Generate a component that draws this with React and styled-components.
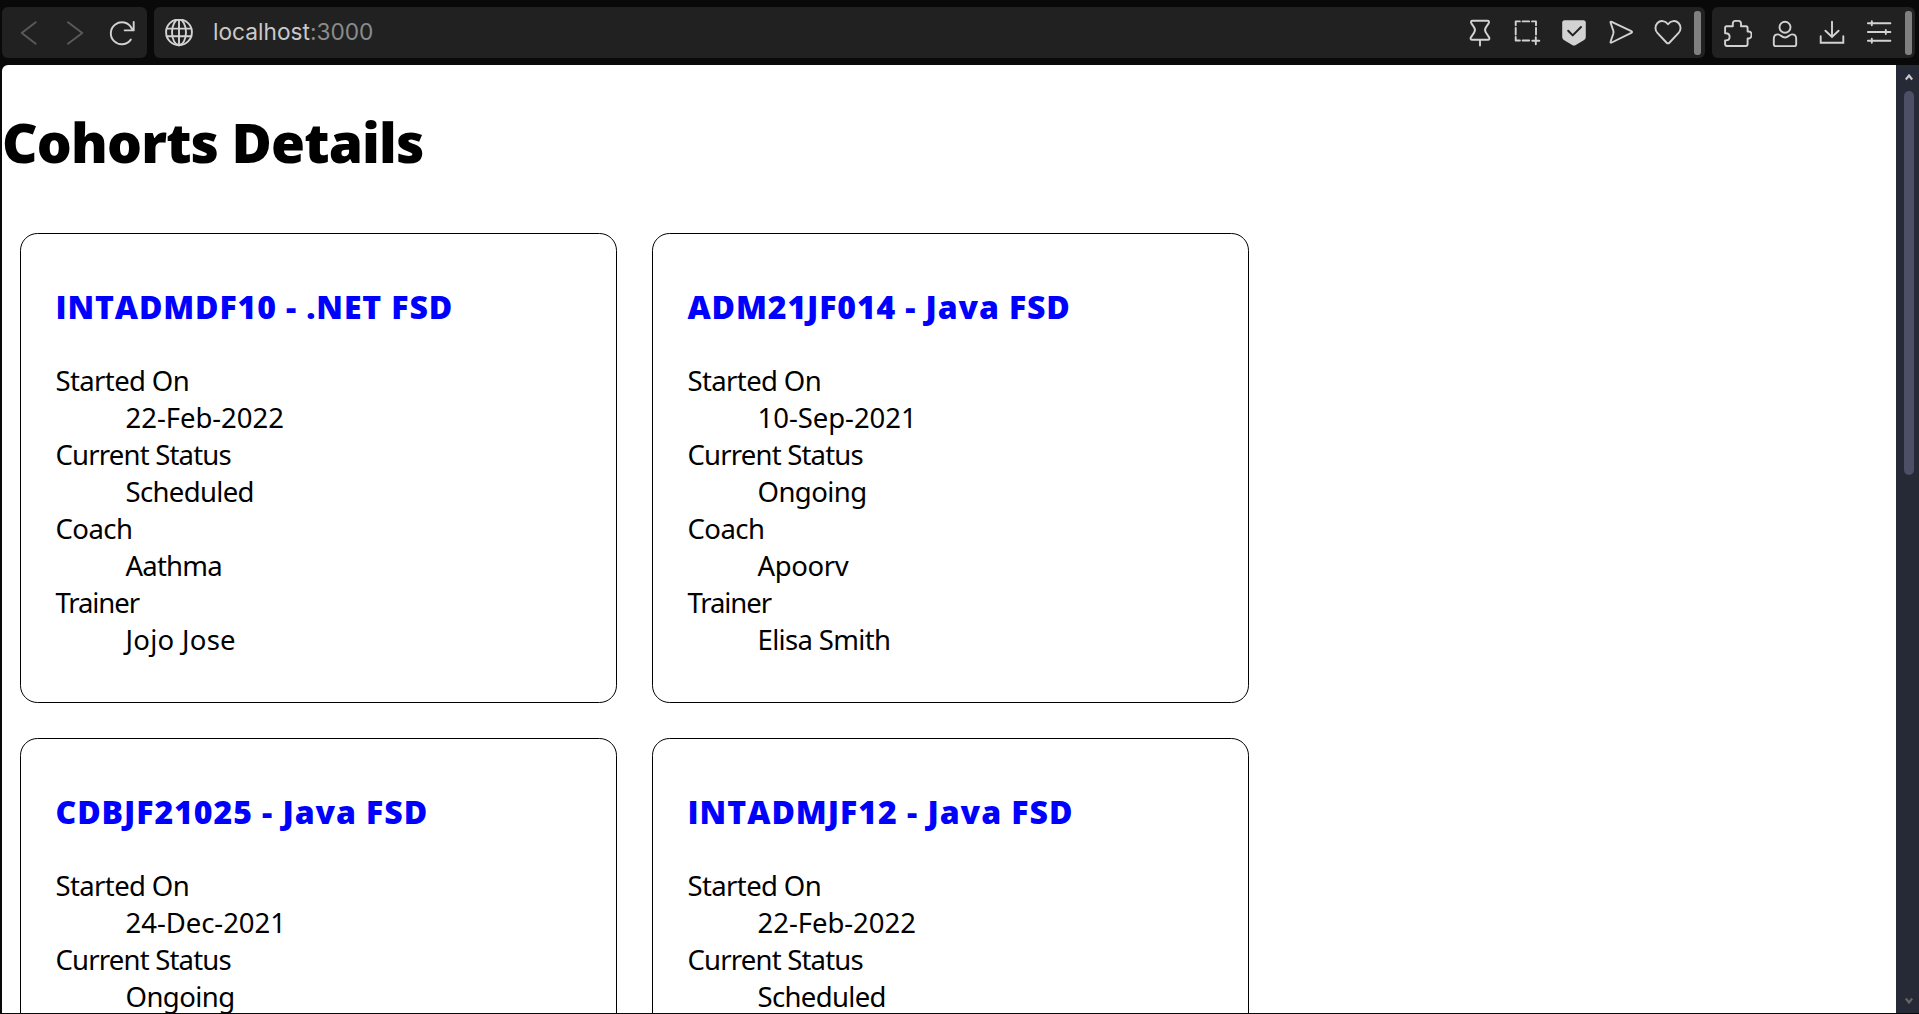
import React from 'react';
import styled, { createGlobalStyle } from 'styled-components';

const Global = createGlobalStyle`
  * { box-sizing: border-box; }
  html, body { margin: 0; padding: 0; background: #090909; overflow: hidden; }
`;

const Window = styled.div`
  width: 1919px;
  height: 1014px;
  display: flex;
  flex-direction: column;
  background: #090909;
  font-family: 'Noto Sans', 'Open Sans', sans-serif;
`;

const Toolbar = styled.header`
  flex: none;
  height: 65px;
  padding: 7px 4px 7px 2px;
  display: flex;
  gap: 7px;
`;

const Group = styled.div`
  height: 51px;
  display: flex;
  align-items: center;
  gap: 19px;
  flex: ${(p) => (p.$grow ? '1' : 'none')};
  padding: 1px ${(p) => p.$right}px 0 ${(p) => p.$left}px;
  border-radius: 6px;
  background: #212121;
`;

const Glyph = styled.svg`
  flex: none;
  display: block;
  width: 28px;
  height: 28px;
  fill: none;
  stroke: ${(p) => (p.$dim ? '#5a5a5a' : '#d2d2d2')};
  stroke-width: 1.9;
  stroke-linecap: round;
  stroke-linejoin: round;
`;

const Address = styled.div`
  flex: 1;
  padding: 0 0 2px 1px;
  font: 400 22.7px/28px Inter, 'Open Sans', sans-serif;
  color: #c9c9c9;
`;

const Port = styled.span`
  color: #8b8b8b;
`;

const Handle = styled.i`
  width: 7px;
  height: 44px;
  margin-left: -7px;
  border-radius: 3px;
  background: #808080;
`;

const Viewport = styled.div`
  flex: 1;
  min-height: 0;
  display: flex;
  margin: 0 0 1px 2px;
  overflow: hidden;
  border-top-left-radius: 6px;
  background: #fff;
`;

const Page = styled.main`
  flex: 1;
  padding-top: 39px;
  overflow: hidden;
  color: #000;
`;

const Heading = styled.h1`
  margin: 0;
  font-family: 'Open Sans', 'Noto Sans', sans-serif;
  font-size: 55px;
  line-height: 75px;
  font-weight: 800;
  letter-spacing: -0.86px;
  white-space: nowrap;
`;

const Cards = styled.div`
  display: grid;
  grid-template-columns: 597px 597px;
  gap: 35px;
  padding: 54px 0 0 18px;
`;

const Card = styled.section`
  height: 470px;
  padding: 51px 34px 0 34.5px;
  border: 1px solid #000;
  border-radius: 17.5px;
`;

const Title = styled.h3`
  margin: 0 0 33px;
  font-family: 'Open Sans', 'Noto Sans', sans-serif;
  font-size: 32px;
  line-height: 44px;
  font-weight: 800;
  color: #00f;
  white-space: nowrap;
  letter-spacing: ${(p) => p.$track}px;
`;

const Details = styled.dl`
  margin: 0;
  font-size: 27.5px;
  line-height: 37px;
`;

const Term = styled.dt`
  letter-spacing: ${(p) => p.$track}px;
`;

const Value = styled.dd`
  margin: 0 0 0 70px;
  letter-spacing: ${(p) => p.$track}px;
`;

const Scrollbar = styled.aside`
  flex: none;
  width: 23px;
  padding: 8px 5px 8px 8px;
  display: flex;
  flex-direction: column;
  justify-content: space-between;
  align-items: center;
  background: #262a36;
`;

const ScrollTop = styled.div`
  display: flex;
  flex-direction: column;
  align-items: center;
  gap: 10px;
`;

const Thumb = styled.div`
  width: 10px;
  height: 384px;
  border-radius: 5px;
  background: #4c4f66;
`;

const Arrow = styled.svg`
  display: block;
  width: 8px;
  height: 8px;
  fill: none;
  stroke: ${(p) => p.$color};
  stroke-width: 2.2;
`;

const terms = [
  { label: 'Started On', track: -0.62 },
  { label: 'Current Status', track: -0.81 },
  { label: 'Coach', track: -0.55 },
  { label: 'Trainer', track: -1.1 },
];

const cohorts = [
  {
    title: 'INTADMDF10 - .NET FSD',
    track: 0.87,
    values: [['22-Feb-2022', -0.04], ['Scheduled', -0.65], ['Aathma', -0.8], ['Jojo Jose', 0.28]],
  },
  {
    title: 'ADM21JF014 - Java FSD',
    track: 0.87,
    values: [['10-Sep-2021', -0.04], ['Ongoing', -0.58], ['Apoorv', -0.35], ['Elisa Smith', -0.65]],
  },
  { title: 'CDBJF21025 - Java FSD', track: 0.93, values: [['24-Dec-2021', -0.04], ['Ongoing', -0.58]] },
  { title: 'INTADMJF12 - Java FSD', track: 0.98, values: [['22-Feb-2022', -0.04], ['Scheduled', -0.65]] },
];

function Icon({ children, ...rest }) {
  return <Glyph viewBox="0 0 28 28" {...rest}>{children}</Glyph>;
}

export default function App() {
  return (
    <Window>
      <Global />
      <Toolbar>
        <Group $left={13} $right={10}>
          <Icon $dim><path d="M20.7 3.3 6.7 14l14 10.7" /></Icon>
          <Icon $dim><path d="M6 3.3 20.3 14 6 24.7" /></Icon>
          <Icon><path d="M21.8 20.6A11 11 0 1 1 22.6 9.2L24.3 11.3M24.7 3v8.4h-9" /></Icon>
        </Group>
        <Group $left={11} $right={4} $grow>
          <Icon>
            <circle cx="14" cy="13.3" r="12.9" />
            <ellipse cx="14" cy="13.3" rx="7" ry="12.9" />
            <path d="M14 .4v25.800M1.600 9.600h24.800M1.600 17.200h24.800" />
          </Icon>
          <Address>localhost<Port>:3000</Port></Address>
          <Icon><path d="M6.5 1.8h15c1.6 0 1.9 1.4 1.1 2.6l-2.7 4c-.9 1.3-.9 3.8 0 5.2l3.2 4.8c.8 1.2.2 2.3-1.2 2.3H6.1c-1.4 0-2-1.1-1.2-2.3l3.2-4.8c.9-1.4.9-3.9 0-5.2l-2.7-4c-.8-1.2-.5-2.6 1.1-2.6zM14 21v5.6" /></Icon>
          <Icon><path d="M2.7 6.2V2.4h4.2M9.6 2.4h6.6M19 2.4h4v3.8M2.7 9v6.5M23 9v6.5M2.7 18v3.5h4.2M9.6 21.5h6.6M19.3 21.7h7M22.8 18.2v7" /></Icon>
          <Icon>
            <path d="M4.5 1.2h19c1.4 0 2.3 1 2.3 2.3v13.7c0 2.2-.8 3.4-2.5 4.4l-7.5 4.3c-1.3.7-2.3.7-3.6 0l-7.500-4.3c-1.7-1-2.500-2.200-2.500-4.400V3.500c0-1.300.9-2.300 2.300-2.300z" fill="#d2d2d2" stroke="none" />
            <path d="M8.200 11.800 12.700 16.400 21 8" stroke="#212121" strokeWidth="2" />
          </Icon>
          <Icon><path d="M4.700 2.800 24.300 12.200c1 .5 1 1.100 0 1.600L4.700 23.500c-1 .5-1.500 0-1.100-1l2.700-7.700c.3-1.100.3-2.200 0-3.200L3.600 3.800c-.4-1 .1-1.500 1.100-1z" /></Icon>
          <Icon><path d="M14 5.300c2.800-3.800 7.700-4.300 10.500-1.300 2.900 3.100 2.600 7.400-.1 10.200l-8.800 9.300c-1.200 1.200-2 1.200-3.200 0L3.600 14.200C.9 11.400.6 7.100 3.500 4 6.300 1 11.200 1.500 14 5.300z" /></Icon>
          <Handle />
        </Group>
        <Group $left={12} $right={3}>
          <Icon><path d="M2.500 7.200h6.300V4.500c0-1.500 1-2.600 2.500-2.600h3.200c1.500 0 2.500 1.100 2.500 2.600v2.700h5c1 0 1.600.6 1.600 1.600v3.700h1.200c1.600 0 2.800 1.300 2.800 3.300s-1.200 3.700-2.800 3.700h-1.200v5.600c0 1.200-.7 1.900-1.900 1.900H3c-1.200 0-1.900-.7-1.900-1.900v-3.700h.8c2.200 0 3.700-1.400 3.700-3.600s-1.500-3.600-3.700-3.600h-.8V9c0-1.200.4-1.800 1.400-1.800z" /></Icon>
          <Icon>
            <circle cx="14" cy="8.300" r="5.500" />
            <path d="M2.800 25.300v-5.500c0-2.800 1.600-4.400 4.200-4.400 1.300 0 1.900.5 3 1.400 2.400 2 5.600 2 8 0 1.100-.9 1.700-1.400 3-1.400 2.600 0 4.200 1.600 4.200 4.400v5.500c0 1.200-.6 1.900-1.800 1.900H4.600c-1.200 0-1.800-.7-1.800-1.900z" />
          </Icon>
          <Icon><path d="M14 2.800v15M7.400 11.700l6.600 6.200 6.600-6.200M2.700 17.200v6.500h22.600v-6.500" strokeLinejoin="miter" /></Icon>
          <Icon><path d="M2.900 4.300h22.500M2.900 13h22.500M2.900 21.700h22.500M6.800 2.300v4M20.800 11v4M6.800 19.700v4" /></Icon>
          <Handle />
        </Group>
      </Toolbar>
      <Viewport>
        <Page>
          <Heading>Cohorts Details</Heading>
          <Cards>
            {cohorts.map((c) => (
              <Card key={c.title}>
                <Title $track={c.track}>{c.title}</Title>
                <Details>
                  {c.values.map(([text, track], i) => (
                    <React.Fragment key={terms[i].label}>
                      <Term $track={terms[i].track}>{terms[i].label}</Term>
                      <Value $track={track}>{text}</Value>
                    </React.Fragment>
                  ))}
                </Details>
              </Card>
            ))}
          </Cards>
        </Page>
        <Scrollbar>
          <ScrollTop>
            <Arrow $color="#c8c8c8" viewBox="0 0 8 8"><path d="M.8 6.500 4 2.500l3.200 4" /></Arrow>
            <Thumb />
          </ScrollTop>
          <Arrow $color="#666" viewBox="0 0 8 8"><path d="M.8 1.500 4 5.500l3.200-4" /></Arrow>
        </Scrollbar>
      </Viewport>
    </Window>
  );
}
